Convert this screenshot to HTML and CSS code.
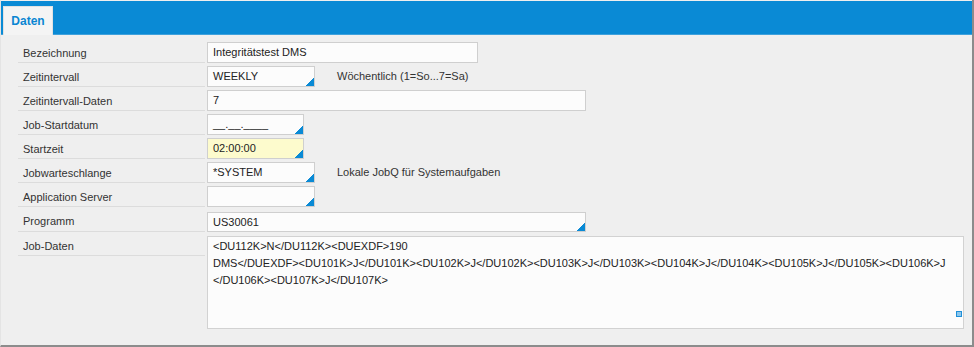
FILE: index.html
```html
<!DOCTYPE html>
<html lang="de">
<head>
  <meta charset="UTF-8">
  <title>Job-Daten</title>
  <link rel="stylesheet" href="styles.css">
</head>
<body>
  <div class="window">
    <div class="tabbar">
      <div class="tab">Daten</div>
    </div>
    <div class="form">
      <div class="row">
        <div class="label">Bezeichnung</div>
        <div class="field w-270">Integritätstest DMS</div>
      </div>
      <div class="row">
        <div class="label">Zeitintervall</div>
        <div class="field w-107 select">WEEKLY</div>
        <div class="hint">Wöchentlich (1=So...7=Sa)</div>
      </div>
      <div class="row">
        <div class="label">Zeitintervall-Daten</div>
        <div class="field w-378">7</div>
      </div>
      <div class="row">
        <div class="label">Job-Startdatum</div>
        <div class="field w-96 select">__.__.____</div>
      </div>
      <div class="row">
        <div class="label">Startzeit</div>
        <div class="field w-96 select required">02:00:00</div>
      </div>
      <div class="row">
        <div class="label">Jobwarteschlange</div>
        <div class="field w-107 select">*SYSTEM</div>
        <div class="hint">Lokale JobQ für Systemaufgaben</div>
      </div>
      <div class="row">
        <div class="label">Application Server</div>
        <div class="field w-107 select"></div>
      </div>
      <div class="row tall">
        <div class="label">Programm</div>
        <div class="field w-378 select">US30061</div>
      </div>
      <div class="row area-row">
        <div class="label">Job-Daten</div>
        <div class="textarea">&lt;DU112K&gt;N&lt;/DU112K&gt;&lt;DUEXDF&gt;190
DMS&lt;/DUEXDF&gt;&lt;DU101K&gt;J&lt;/DU101K&gt;&lt;DU102K&gt;J&lt;/DU102K&gt;&lt;DU103K&gt;J&lt;/DU103K&gt;&lt;DU104K&gt;J&lt;/DU104K&gt;&lt;DU105K&gt;J&lt;/DU105K&gt;&lt;DU106K&gt;J
&lt;/DU106K&gt;&lt;DU107K&gt;J&lt;/DU107K&gt;<span class="grip"></span></div>
      </div>
    </div>
  </div>
</body>
</html>
```

FILE: styles.css
```css
body { margin: 0; background: #ffffff; font-family: "Liberation Sans", Arial, sans-serif; font-size: 11px; color: #333333; }
.window { width: 974px; height: 347px; box-sizing: border-box; padding-top: 1px; border-left: 1px solid #e4e4e4; border-right: 2px solid #8c8c8c; border-bottom: 2px solid #8c8c8c; background: #efefef; display: flex; flex-direction: column; }
.tabbar { height: 34px; box-sizing: border-box; background: #0a8ad5; border-bottom: 1px solid #3fa1dc; display: flex; align-items: flex-end; padding-left: 2px; }
.tab { width: 50px; height: 29px; margin-bottom: -1px; box-sizing: border-box; background: #f4f4f4; border: 1px solid #e2e2e2; border-bottom: none; color: #0a86d2; font-size: 12px; font-weight: bold; display: flex; align-items: center; justify-content: center; padding-bottom: 1px; }
.form { padding: 4px 0 0 17px; }
.row { display: flex; align-items: flex-end; height: 24px; }
.row.tall { height: 25px; }
.label { width: 187px; height: 24px; box-sizing: border-box; padding: 4px 0 0 5px; margin-right: 2px; border-bottom: 1px solid #dcdcdc; display: flex; align-items: center; align-self: flex-start; }
.row.tall .label { height: 25px; }
.field { position: relative; height: 21px; box-sizing: border-box; border: 1px solid #cfcfcf; background: #fcfcfc; color: #222222; padding-left: 5px; line-height: 19px; white-space: nowrap; }
.row.tall .field { height: 20px; line-height: 18px; }
.field.required { background: #fdfbcd; }
.field.select::after { content: ""; position: absolute; right: 0; bottom: 0; width: 8px; height: 8px; background: linear-gradient(135deg, transparent 50%, #0a8ad5 50%); }
.w-270 { width: 271px; }
.w-107 { width: 108px; }
.w-96 { width: 97px; }
.w-378 { width: 379px; }
.hint { align-self: center; margin-left: 22px; padding-top: 2px; color: #333333; }
.area-row { height: auto; align-items: flex-start; }
.textarea { position: relative; width: 757px; height: 93px; margin-top: 4px; box-sizing: border-box; border: 1px solid #d2d2d2; background: #fcfcfc; color: #222222; padding: 1px 5px; line-height: 17px; white-space: pre; }
.grip { position: absolute; right: 1px; bottom: 11px; width: 6px; height: 6px; box-sizing: border-box; background: #8cc6ec; border: 1px solid #1f8fd8; }
```
